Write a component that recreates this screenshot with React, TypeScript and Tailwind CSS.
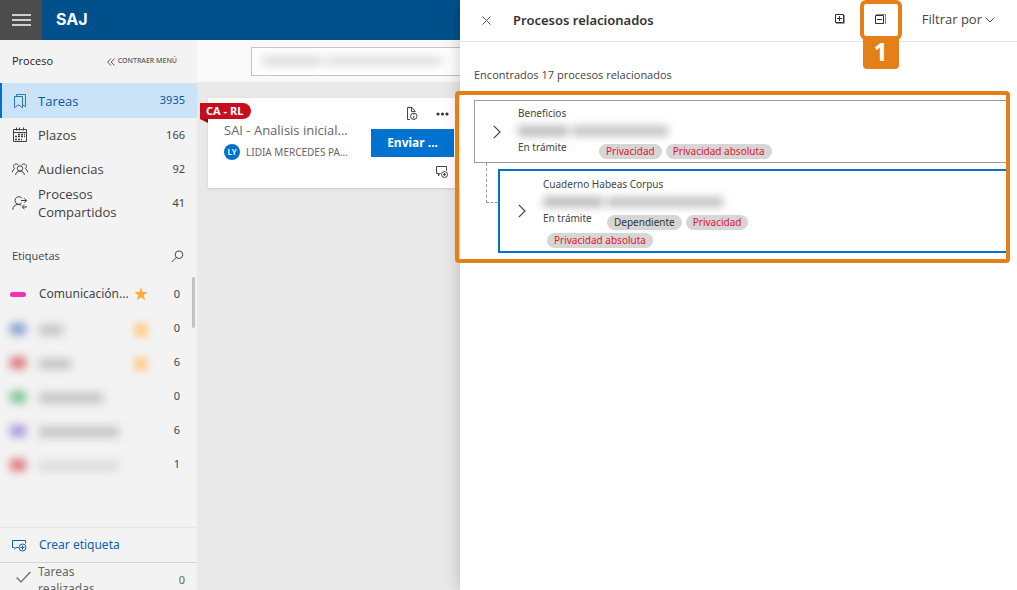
import type { ReactNode } from "react";

function BookmarksIcon() {
  return (
    <svg width="14" height="16" viewBox="0 0 14 16" fill="none" stroke="currentColor" className="shrink-0">
      <path d="M1.500 3.500h8v11.200l-4-3-4 3z" />
      <path d="M3.500 3.500v-2h9v12.200l-3-2" />
    </svg>
  );
}

function CalendarIcon() {
  return (
    <svg width="16" height="16" viewBox="0 0 16 16" fill="none" stroke="currentColor" className="shrink-0">
      <path d="M1.500 2.500h13v12h-13zM1.500 5.500h13M4.500.5v3M7.500.5v3M11.500.5v3" />
      <path d="M6 7.500h7M3 9.500h10M3 12.500h7" strokeDasharray="2 1" strokeWidth="1.600" />
    </svg>
  );
}

function PeopleIcon() {
  return (
    <svg width="16" height="14" viewBox="0 0 16 14" fill="none" stroke="currentColor" className="shrink-0">
      <circle cx="8" cy="6.500" r="2.700" />
      <path d="M3.600 13c.2-2.500 1.900-3.800 4.400-3.800s4.200 1.300 4.400 3.800" />
      <path d="M6.300 3.300a2.500 2.500 0 1 0-3.600 3.200C1.300 7.200.6 8.500.5 10.200M9.700 3.300a2.500 2.500 0 1 1 3.600 3.200c1.400.7 2.100 2 2.200 3.700" />
    </svg>
  );
}

function PersonSwitchIcon() {
  return (
    <svg width="16" height="15" viewBox="0 0 16 15" fill="none" stroke="currentColor" className="shrink-0">
      <path d="M9.700 7a3.800 3.800 0 1 1 .3-4.600M.7 13.800c.3-3.500 2.400-5.400 5.600-5.400 1.300 0 2.400.4 3.200 1" />
      <path d="M9 4.500h5.500M12.300 2.200l2.300 2.300-2.300 2.300M15 11h-4.500M12.500 8.800L10.300 11l2.200 2.300" />
    </svg>
  );
}

function SearchIcon() {
  return (
    <svg width="13" height="13" viewBox="0 0 13 13" fill="none" stroke="currentColor">
      <circle cx="8" cy="4.700" r="3.800" />
      <path d="M5.200 7.500L.5 12.200" />
    </svg>
  );
}

function StarIcon({ className }: { className: string }) {
  return (
    <svg width="14" height="14" viewBox="0 0 14 14" className={className} fill="currentColor">
      <path d="M7 .2l1.700 4.900h5.100L9.700 8.200l1.500 5.100L7 10.200l-4.200 3.100 1.500-5.100L.2 5.100h5.100z" />
    </svg>
  );
}

function LabelAddIcon() {
  return (
    <svg width="15" height="13" viewBox="0 0 15 13" fill="none" stroke="currentColor" className="shrink-0">
      <path d="M6.500 8.500H4L2.200 10.300M2.500 8.500H.5v-7h13v3" />
      <circle cx="10.500" cy="8.500" r="3.500" />
      <path d="M10.500 6.500v4M8.500 8.500h4" />
    </svg>
  );
}

function CommentAddIcon() {
  return (
    <svg width="14" height="14" viewBox="0 0 14 14" fill="none" stroke="currentColor">
      <path d="M5.500 8.500H4.500L3.500 11V8.500h-2v-7h10v4" />
      <circle cx="9.500" cy="9.500" r="3" />
      <path d="M9.500 8v3M8 9.500h3" />
    </svg>
  );
}

function CheckIcon() {
  return (
    <svg width="15" height="12" viewBox="0 0 15 12" fill="none" stroke="currentColor" strokeWidth="1.200">
      <path d="M.6 6.500L5 11 14.400 1" />
    </svg>
  );
}

function DocumentInfoIcon() {
  return (
    <svg width="12" height="14" viewBox="0 0 12 14" fill="none" stroke="currentColor">
      <path d="M4 12.500H1.500v-12h4.500l3 3.500v1M5.500.5v4h3.500" />
      <circle cx="7.800" cy="9.300" r="3.200" />
      <path d="M7.800 7.200v1M7.800 9v2.500" />
    </svg>
  );
}

function ChevronIcon() {
  return (
    <svg width="8" height="14" viewBox="0 0 8 14" fill="none" stroke="currentColor" strokeWidth="1.200">
      <path d="M.8.8L7 7 .8 13.200" />
    </svg>
  );
}

function StackIcon({ plus }: { plus: boolean }) {
  return (
    <svg width="12" height="11" viewBox="0 0 12 11" fill="none" stroke="currentColor">
      {plus ? (
        <>
          <path d="M1.500.5h8v8h-8zM3 4.500h5M5.500 2v5" stroke="#333" />
          <path d="M2 9.500h8.500V1" stroke="#999" />
        </>
      ) : (
        <>
          <path d="M.5 1.500h8v8h-8zM2 5.500h5" stroke="#333" />
          <path d="M1 .5h9.500V10" stroke="#888" />
        </>
      )}
    </svg>
  );
}

function Redacted({ className }: { className: string }) {
  return (
    <span aria-hidden className={`flex gap-1 ${className}`}>
      <span className="h-[10px] w-1/3 bg-[#b8b8b8]" />
      <span className="h-[10px] flex-1 bg-[#c0c0c0]" />
    </span>
  );
}

function NavItem({ icon, label, count, active }: { icon: ReactNode; label: string; count: string; active?: boolean }) {
  return (
    <a
      href="#"
      className={
        active
          ? "flex h-[35px] items-center border-l-2 border-[#0072c9] bg-[#cae3f7] pr-3 pl-[10px] text-[#10569f]"
          : "flex h-[34px] items-center pr-3 pl-3 text-[#3f3f3f]"
      }
    >
      <span className="flex w-[26px] shrink-0">
        <span className={active ? "flex w-4 justify-center text-[#2878bd]" : "flex w-4 justify-center"}>{icon}</span>
      </span>
      <span className="w-24 font-['Open_Sans',sans-serif] text-[13px] leading-[18px] font-medium">{label}</span>
      <span className="ml-auto text-[11px]">{count}</span>
    </a>
  );
}

const hiddenTags = [
  { color: "bg-[#6d8fc9]", name: "w-6", star: true, count: 0 },
  { color: "bg-[#d65c62]", name: "w-8", star: true, count: 6 },
  { color: "bg-[#62bd7b]", name: "w-16", star: false, count: 0 },
  { color: "bg-[#9c83d6]", name: "w-20", star: false, count: 6 },
  { color: "bg-[#d65c62]", name: "w-20 opacity-50", star: false, count: 1 },
];

function Sidebar() {
  return (
    <nav className="flex w-[197px] shrink-0 flex-col bg-[#f3f3f3] text-[#444]">
      <div className="flex h-[43px] shrink-0 items-center justify-between pr-5 pl-3">
        <h2 className="font-['Open_Sans',sans-serif] text-[11px] text-[#222]">Proceso</h2>
        <button className="flex items-center gap-[3px] text-[7px] font-medium text-[#555]">
          <svg width="8" height="8" viewBox="0 0 8 8" fill="none" stroke="currentColor">
            <path d="M4 .5L.7 4 4 7.500M7.500.5L4.200 4l3.300 3.500" />
          </svg>
          CONTRAER MENÚ
        </button>
      </div>
      <NavItem icon={<BookmarksIcon />} label="Tareas" count="3935" active />
      <NavItem icon={<CalendarIcon />} label="Plazos" count="166" />
      <NavItem icon={<PeopleIcon />} label="Audiencias" count="92" />
      <NavItem icon={<PersonSwitchIcon />} label="Procesos Compartidos" count="41" />
      <div className="mt-5 flex h-8 shrink-0 items-center justify-between pr-[13px] pl-3">
        <h3 className="font-['Open_Sans',sans-serif] text-[11px]">Etiquetas</h3>
        <button aria-label="Buscar etiqueta">
          <SearchIcon />
        </button>
      </div>
      <div className="mt-[5px] flex min-h-0 flex-1 items-start justify-between pr-[2px] pl-[10px]">
        <ul className="w-[170px]">
          <li className="flex h-[34px] items-center">
            <span className="h-[5px] w-4 rounded-sm bg-[#f62fb5]" />
            <span className="ml-[13px] w-[93px] text-[12px] whitespace-nowrap">Comunicación...</span>
            <StarIcon className="ml-[2px] text-[#ffab40]" />
            <span className="ml-auto text-[11px]">0</span>
          </li>
          {hiddenTags.map((tag, i) => (
            <li key={i} className="flex h-[34px] items-center">
              <span className={`mt-[2px] h-3 w-4 opacity-80 blur-[4px] ${tag.color}`} />
              <span className="mt-1 ml-[13px] flex w-[93px]">
                <span className={`h-[10px] bg-[#c0c0c0] blur-[5px] ${tag.name}`} />
              </span>
              {tag.star && <span className="mt-1 ml-[2px] size-[14px] bg-[#ffd199] blur-[3px]" />}
              <span className="ml-auto text-[11px]">{tag.count}</span>
            </li>
          ))}
        </ul>
        <span className="h-[51px] w-[3px] rounded bg-[#c2c2c2]" />
      </div>
      <button className="flex h-9 shrink-0 items-center gap-3 border-y border-t-[#e6e6e6] border-b-[#d4d4d4] pl-3 text-[12px] text-[#0a62b0]">
        <LabelAddIcon />
        Crear etiqueta
      </button>
      <a href="#" className="flex h-[27px] shrink-0 pr-3 pl-4 text-[#666]">
        <span className="pt-2">
          <CheckIcon />
        </span>
        <span className="ml-[7px] w-20 text-[12px] leading-[17px]">Tareas realizadas</span>
        <span className="ml-auto pt-2 text-[11px] leading-[17px]">0</span>
      </a>
    </nav>
  );
}

function TaskCard() {
  return (
    <article className="relative mt-4 ml-[11px] flex h-[90px] justify-between bg-white pr-[6px] pl-4 shadow-sm">
      <span className="absolute top-[5px] -left-2 flex h-4 items-center rounded-r-full bg-[#c50f1f] pr-2 pl-[6px] text-[11px] font-bold text-white">
        CA - RL
      </span>
      <svg width="8" height="4" viewBox="0 0 8 4" className="absolute top-[21px] -left-2">
        <path d="M0 0h8v4z" fill="#8d0b16" />
      </svg>
      <div className="pt-[23px]">
        <h3 className="font-['Open_Sans',sans-serif] text-[13px] leading-[18px] font-medium whitespace-nowrap text-[#666]">
          SAI - Analisis inicial...
        </h3>
        <p className="mt-[5px] flex items-center gap-[6px] text-[10px] leading-4 whitespace-nowrap text-[#666]">
          <span className="flex size-4 items-center justify-center rounded-full bg-[#0072c9] text-[8px] font-semibold text-white">LY</span>
          LIDIA MERCEDES PA...
        </p>
      </div>
      <div className="flex w-[83px] flex-col items-end text-[#444]">
        <div className="flex h-[31px] items-center gap-[18px] pr-[5px]">
          <button aria-label="Información del documento">
            <DocumentInfoIcon />
          </button>
          <button aria-label="Más opciones">
            <svg width="13" height="4" viewBox="0 0 13 4" fill="#333">
              <circle cx="2" cy="2" r="1.600" />
              <circle cx="6.500" cy="2" r="1.600" />
              <circle cx="11" cy="2" r="1.600" />
            </svg>
          </button>
        </div>
        <button className="h-7 w-full bg-[#0072d0] text-[12px] font-bold text-white">Enviar ...</button>
        <button aria-label="Agregar comentario" className="mt-2 mr-[5px]">
          <CommentAddIcon />
        </button>
      </div>
    </article>
  );
}

function Tag({ children, muted }: { children: ReactNode; muted?: boolean }) {
  return (
    <span
      className={
        muted
          ? "rounded-full bg-[#d6d6d6] px-[7px] text-[10px] leading-[15px] text-[#333]"
          : "rounded-full bg-[#d6d6d6] px-[7px] text-[10px] leading-[15px] text-[#e5142d]"
      }
    >
      {children}
    </span>
  );
}

function RelatedList() {
  return (
    <section className="mr-[7px] -ml-[5px] rounded border-4 border-[#e57f17] pt-[5px] pb-[6px] pl-[15px] text-[#444]">
      <div className="flex h-[63px] items-center border-y border-l border-[#9b9b9b] pl-[18px]">
        <button aria-label="Expandir Beneficios">
          <ChevronIcon />
        </button>
        <div className="ml-[17px] pb-[3px] text-[10px] leading-[17px]">
          <p>Beneficios</p>
          <Redacted className="mt-1 mb-[3px] w-[150px] blur-[4px]" />
          <div className="flex h-[17px] items-start">
            <span className="w-[81px]">En trámite</span>
            <span className="mt-[5px] flex gap-1">
              <Tag>Privacidad</Tag>
              <Tag>Privacidad absoluta</Tag>
            </span>
          </div>
        </div>
      </div>
      <div className="flex">
        <span className="ml-3 h-10 w-3 border-b border-l border-dashed border-[#999]" />
        <div className="mt-[6px] flex h-[84px] flex-1 items-center border-y-2 border-l-2 border-[#0072c9] pl-[18px]">
          <button aria-label="Expandir Cuaderno Habeas Corpus">
            <ChevronIcon />
          </button>
          <div className="ml-[17px] pt-[2px] text-[10px] leading-[17px]">
            <p>Cuaderno Habeas Corpus</p>
            <Redacted className="mt-1 mb-[3px] w-[180px] blur-[4px]" />
            <div className="flex h-[17px] items-start">
              <span className="w-16">En trámite</span>
              <span className="mt-[5px] flex gap-1">
                <Tag muted>Dependiente</Tag>
                <Tag>Privacidad</Tag>
              </span>
            </div>
            <div className="mt-[6px] ml-1 flex">
              <Tag>Privacidad absoluta</Tag>
            </div>
          </div>
        </div>
      </div>
    </section>
  );
}

function RelatedDrawer() {
  return (
    <aside className="relative flex-1 bg-white shadow-[0_0_16px_rgba(0,0,0,0.22)]">
      <header className="flex h-[42px] items-center border-b border-[#e4e4e4] pr-[22px] pl-[22px]">
        <button aria-label="Cerrar" className="text-[#555]">
          <svg width="9" height="9" viewBox="0 0 9 9" fill="none" stroke="currentColor">
            <path d="M.5.5l8 8M8.500.5l-8 8" />
          </svg>
        </button>
        <h1 className="ml-[22px] text-[13px] font-semibold text-[#333]">Procesos relacionados</h1>
        <div className="ml-auto flex items-center pb-[2px]">
          <button aria-label="Expandir todos">
            <StackIcon plus />
          </button>
          <div className="relative ml-[14px]">
            <button
              aria-label="Contraer todos"
              className="flex h-10 w-[42px] items-center justify-center rounded-md border-4 border-[#e57f17]"
            >
              <StackIcon plus={false} />
            </button>
            <span className="absolute top-9 left-[3px] flex h-[33px] w-9 items-center justify-center rounded-sm bg-[#e57f17] text-[25px] font-bold text-white">
              1
            </span>
          </div>
          <button className="ml-5 flex items-center gap-[3px] font-['Open_Sans',sans-serif] text-[13px] text-[#444]">
            Filtrar por
            <svg width="10" height="6" viewBox="0 0 10 6" fill="none" stroke="currentColor">
              <path d="M.7.7L5 5 9.300.7" />
            </svg>
          </button>
        </div>
      </header>
      <p className="pt-6 pb-2 pl-[14px] font-['Open_Sans',sans-serif] text-[11px] leading-[17px] text-[#444]">
        Encontrados 17 procesos relacionados
      </p>
      <RelatedList />
    </aside>
  );
}

export default function App() {
  return (
    <div className="flex h-screen overflow-hidden bg-[#e9e9e9] font-['Noto_Sans',sans-serif]">
      <div className="flex w-[460px] shrink-0 flex-col">
        <header className="flex h-10 shrink-0 items-center bg-[#00508c]">
          <button aria-label="Menú" className="flex h-10 w-[42px] items-center justify-center bg-[#4c4c4c]">
            <svg width="19" height="12" viewBox="0 0 19 12" stroke="#cfcfcf" strokeWidth="2">
              <path d="M0 1h19M0 6h19M0 11h19" />
            </svg>
          </button>
          <span className="ml-[14px] pb-[2px] font-['Inter',sans-serif] text-[16px] font-bold text-white">SAJ</span>
        </header>
        <div className="flex min-h-0 flex-1">
          <Sidebar />
          <main className="min-w-0 flex-1">
            <div className="flex h-[42px] items-center bg-[#f9f9f9] pl-[54px]">
              <label className="relative flex h-[29px] flex-1 items-center border border-r-0 border-[#c4c4c4] bg-white">
                <input aria-label="Buscar procesos" className="absolute inset-0 w-full bg-transparent outline-none" />
                <Redacted className="ml-[10px] w-[180px] opacity-50 blur-[5px]" />
              </label>
            </div>
            <TaskCard />
          </main>
        </div>
      </div>
      <RelatedDrawer />
    </div>
  );
}
